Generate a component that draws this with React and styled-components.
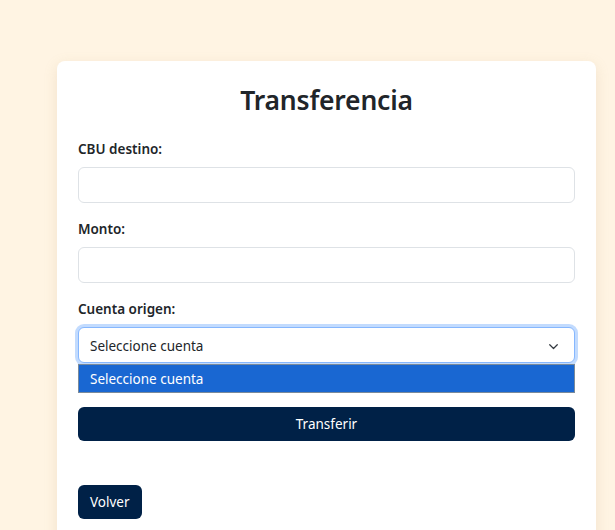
import React from 'react';
import styled, { createGlobalStyle } from 'styled-components';

const GlobalStyle = createGlobalStyle`
	html, body {
		margin: 0;
		background: #fff4e3;
		font-family: "Noto Sans", "Open Sans", sans-serif;
		color: #212529;
	}
`;

const Page = styled.div`
	min-height: 530px;
	padding: 61px 0 0 57px;
	box-sizing: border-box;
	overflow: hidden;
`;

const Card = styled.div`
	width: 539px;
	min-height: 480px;
	box-sizing: border-box;
	background: #fff;
	border-radius: 8px;
	box-shadow: 0 4px 14px rgba(180, 150, 100, 0.18);
	padding: 22px 21px 24px;
`;

const Title = styled.h2`
	margin: 0 0 22px;
	text-align: center;
	font-size: 26.5px;
	line-height: 34px;
	font-weight: 600;
	letter-spacing: -0.2px;
`;

const Group = styled.div`
	position: relative;
	margin-bottom: 16px;
`;

const Label = styled.label`
	display: block;
	font-size: 13.5px;
	line-height: 21px;
	font-weight: 600;
	margin-bottom: 7px;
`;

const Input = styled.div`
	height: 36px;
	box-sizing: border-box;
	border: 1px solid #dee2e6;
	border-radius: 6px;
	background: #fff;
`;

const Select = styled.div`
	height: 36px;
	box-sizing: border-box;
	border: 1px solid #86b7fe;
	border-radius: 6px;
	box-shadow: 0 0 0 3px rgba(13, 110, 253, 0.25);
	background: #fff;
	display: flex;
	align-items: center;
	justify-content: space-between;
	padding: 2px 15px 0 11px;
	font-size: 13.5px;
`;

const Options = styled.div`
	position: absolute;
	left: 0;
	right: 0;
	top: calc(100% + 1px);
	border: 1px solid #7a8a9a;
	z-index: 2;
`;

const Option = styled.div`
	height: 27px;
	display: flex;
	align-items: center;
	padding: 0 11px;
	font-size: 13.5px;
	background: ${p => (p.$active ? '#1967d2' : '#fff')};
	color: ${p => (p.$active ? '#fff' : '#212529')};
`;

const Button = styled.button`
	display: block;
	width: ${p => (p.$full ? '100%' : 'auto')};
	height: 34px;
	padding: 0 12px;
	border: none;
	border-radius: 6px;
	background: #002147;
	color: #fff;
	font-family: inherit;
	font-size: 13.5px;
	margin-top: ${p => p.$gap || 0}px;
`;

const Chevron = () => (
	<svg width="11" height="11" viewBox="0 0 16 16" fill="none" stroke="#343a40" strokeWidth="1.8" strokeLinecap="round" strokeLinejoin="round">
		<path d="M2.5 5.5l5.5 5.5 5.5-5.5" />
	</svg>
);

export default function App() {
	return (
		<>
			<GlobalStyle />
			<Page>
				<Card>
					<Title>Transferencia</Title>
					<Group>
						<Label>CBU destino:</Label>
						<Input />
					</Group>
					<Group>
						<Label>Monto:</Label>
						<Input />
					</Group>
					<Group>
						<Label>Cuenta origen:</Label>
						<Select>
							<span>Seleccione cuenta</span>
							<Chevron />
						</Select>
						<Options>
							<Option $active>Seleccione cuenta</Option>
						</Options>
					</Group>
					<Button $full $gap={44}>Transferir</Button>
					<Button $gap={44}>Volver</Button>
				</Card>
			</Page>
		</>
	);
}
